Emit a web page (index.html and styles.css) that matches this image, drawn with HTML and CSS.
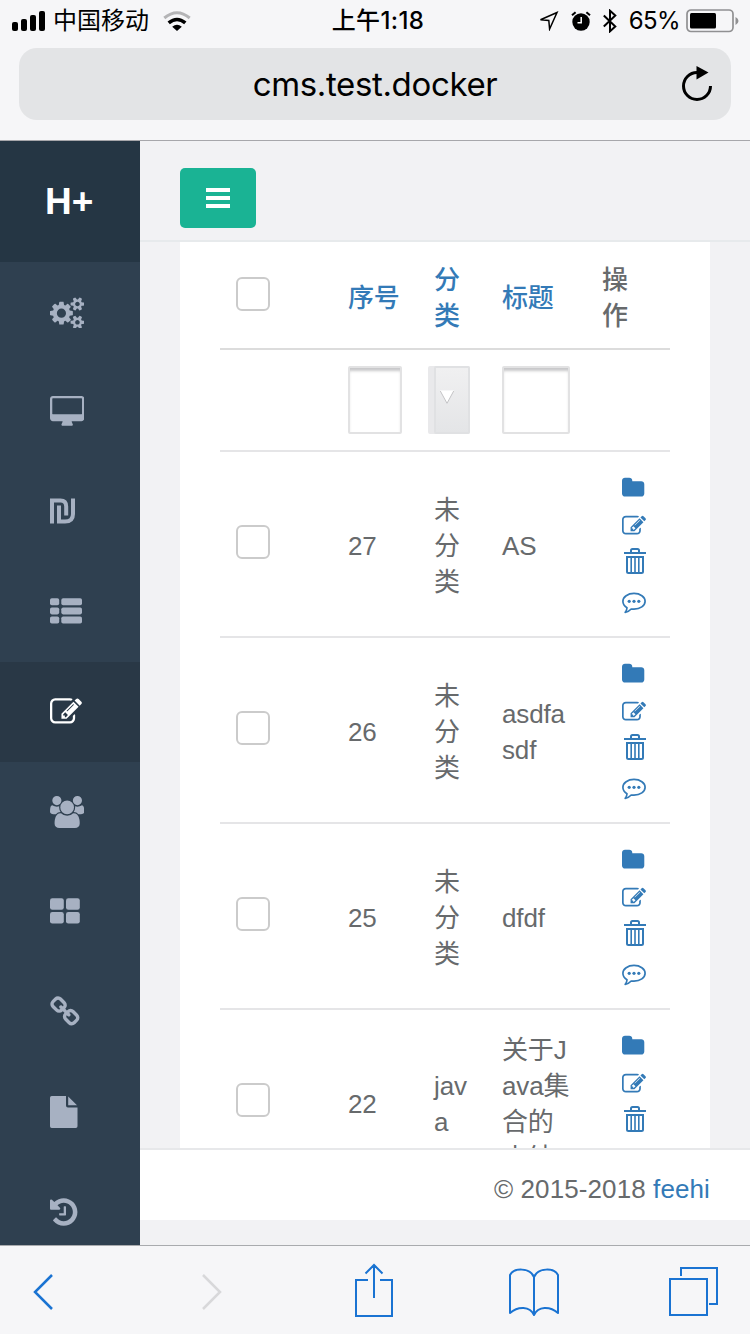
FILE: index.html
```html
<!DOCTYPE html>
<html lang="zh-CN">
<head>
<meta charset="utf-8">
<title>cms.test.docker</title>
<link rel="stylesheet" href="styles.css">
</head>
<body>
<svg class="defs" width="0" height="0" aria-hidden="true">
  <symbol id="edit" viewBox="0 0 1792 1792"><path d="M888 1184l116-116-152-152-116 116v56h96v96h56zm440-720q-16-16-33 1l-350 350q-17 17-1 33t33-1l350-350q17-17 1-33zm80 594v190q0 119-84.500 203.500t-203.500 84.500h-832q-119 0-203.500-84.500t-84.500-203.500v-832q0-119 84.500-203.500t203.500-84.500h832q63 0 117 25 15 7 18 23 3 17-9 29l-49 49q-14 14-32 8-23-6-45-6h-832q-66 0-113 47t-47 113v832q0 66 47 113t113 47h832q66 0 113-47t47-113v-126q0-13 9-22l64-64q15-15 35-7t20 29zm-96-738l288 288-672 672h-288v-288zm444 132l-92 92-288-288 92-92q28-28 68-28t68 28l152 152q28 28 28 68t-28 68z"/></symbol>
  <symbol id="folder" viewBox="64 0 1792 1792"><path d="M1728 608v704q0 92-66 158t-158 66h-1216q-92 0-158-66t-66-158v-960q0-92 66-158t158-66h320q92 0 158 66t66 158v32h672q92 0 158 66t66 158z"/></symbol>
  <symbol id="trash" viewBox="0 0 22 26"><g fill="none" stroke="currentColor" stroke-width="2"><path d="M0 5h22M7 5V2.500Q7 1 8.500 1h5Q15 1 15 2.500V5"/><path d="M3 9h16v14.500Q19 25 17.500 25h-13Q3 25 3 23.500z"/><path stroke-width="1.600" d="M7.200 9v15M11 9v15M14.800 9v15"/></g></symbol>
  <symbol id="comment" viewBox="0 0 24 22"><path d="M12 1.400c6.200 0 11.100 3.500 11.100 7.900s-4.900 7.900-11.100 7.900c-1 0-1.900-.1-2.800-.2-1.700 1.900-3.700 3-6 3.300 1.200-1.200 1.700-2.400 1.800-4.500C2.500 14.300.9 12 .9 9.300.9 4.900 5.800 1.400 12 1.400z" fill="none" stroke="currentColor" stroke-width="1.700" stroke-linejoin="round"/><g><circle cx="7.200" cy="9.300" r="1.600"/><circle cx="12" cy="9.300" r="1.600"/><circle cx="16.800" cy="9.300" r="1.600"/></g></symbol>
</svg>

<header class="browser-top">
  <div class="status">
    <div class="status-left">
      <svg class="signal" width="34" height="20" viewBox="0 0 34 20"><rect x="0" y="11" width="6" height="9" rx="2"/><rect x="9" y="8" width="6" height="12" rx="2"/><rect x="18" y="4" width="6" height="16" rx="2"/><rect x="27" y="0" width="6" height="20" rx="2"/></svg>
      <span class="carrier">中国移动</span>
      <svg class="wifi" width="28" height="20" viewBox="0 0 28 20" fill="none"><path d="M1.300 7Q14-3.600 26.700 7" fill="none" stroke="#b4b4b6" stroke-width="3"/><path d="M5.700 11.900q8.300-6.800 16.600 0" fill="none" stroke="#000" stroke-width="3.600"/><path d="M9.200 15.700q4.800-3.800 9.600 0L14 20z" fill="#000"/></svg>
    </div>
    <div class="clock">上午1:18</div>
    <div class="status-right">
      <svg width="20" height="20" viewBox="0 0 20 20"><path d="M18 1.500L1.500 8.700l8.300.7.800 8.600z" fill="none" stroke="#000" stroke-width="1.500"/></svg>
      <svg class="alarm" width="20" height="20" viewBox="0 0 20 20"><circle cx="10" cy="11" r="8.700"/><path d="M1 4.300L4.600 1.200M19 4.300L15.400 1.200" stroke="#000" stroke-width="2"/><path d="M10.200 6v5.800H6.500" fill="none" stroke="#fff" stroke-width="1.500"/></svg>
      <svg class="bluetooth" width="14" height="24" viewBox="0 0 14 24"><path d="M.8 6.500l11.500 11L7 22.300V1.700l5.300 4.800-11.500 11" fill="none" stroke="#000" stroke-width="2"/></svg>
      <span class="percent">65%</span>
      <svg width="53" height="24" viewBox="0 0 53 24"><rect x="1" y="1" width="46" height="21.500" rx="4" fill="none" stroke="#909092" stroke-width="1.700"/><rect x="4" y="4" width="26" height="15.500" rx="1.500"/><path d="M49.500 8q3 1.500 3 4t-3 4z" fill="#909092"/></svg>
    </div>
  </div>
  <div class="address">
    <span class="url">cms.test.docker</span>
    <svg class="reload" width="32" height="36" viewBox="0 0 32 36"><path d="M16 6.500A13.500 13.500 0 1 0 29.500 20" fill="none" stroke="#000" stroke-width="3"/><path d="M15.500 0L27.500 6.500 15.500 13.500z"/></svg>
  </div>
</header>

<div class="app">
  <nav class="sidebar">
    <div class="brand">H+</div>
    <a class="item"><svg width="34.300" height="32" viewBox="0 0 1920 1792"><path fill-rule="evenodd" d="M896 960q0-106-75-181t-181-75-181 75-75 181 75 181 181 75 181-75 75-181zm768 512q0-52-38-90t-90-38-90 38-38 90q0 53 37.500 90.500t90.500 37.500 90.500-37.500 37.500-90.500zm0-1024q0-52-38-90t-90-38-90 38-38 90q0 53 37.500 90.500t90.500 37.500 90.500-37.500 37.500-90.500zm-384 421v185q0 10-7 19.500t-16 10.500l-155 24q-11 35-32 76 34 48 90 115 7 11 7 20 0 12-7 19-23 30-82.500 89.500t-78.500 59.500q-11 0-21-7l-115-90q-37 19-77 31-11 108-23 155-7 24-30 24h-186q-11 0-20-7.500t-10-17.500l-23-153q-34-10-75-31l-118 89q-7 7-20 7-11 0-21-8-144-133-144-160 0-9 7-19 10-14 41-53t47-61q-23-44-35-82l-152-24q-10-1-17-9.500t-7-19.500v-185q0-10 7-19.500t16-10.500l155-24q11-35 32-76-34-48-90-115-7-11-7-20 0-12 7-20 22-30 82-89t79-59q11 0 21 7l115 90q34-18 77-32 11-108 23-154 7-24 30-24h186q11 0 20 7.500t10 17.500l23 153q34 10 75 31l118-89q8-7 20-7 11 0 21 8 144 133 144 160 0 8-7 19-12 16-42 54t-45 60q23 48 34 82l152 23q10 2 17 10.500t7 19.500zm640 533v140q0 16-149 31-12 27-30 52 51 113 51 138 0 4-4 7-122 71-124 71-8 0-46-47t-52-68q-20 2-30 2t-30-2q-14 21-52 68t-46 47q-2 0-124-71-4-3-4-7 0-25 51-138-18-25-30-52-149-15-149-31v-140q0-16 149-31 13-29 30-52-51-113-51-138 0-4 4-7 4-2 35-20t59-34 30-16q8 0 46 46.500t52 67.500q20-2 30-2t30 2q51-71 92-112l6-2q4 0 124 70 4 3 4 7 0 25-51 138 17 23 30 52 149 15 149 31zm0-1024v140q0 16-149 31-12 27-30 52 51 113 51 138 0 4-4 7-122 71-124 71-8 0-46-47t-52-68q-20 2-30 2t-30-2q-14 21-52 68t-46 47q-2 0-124-71-4-3-4-7 0-25 51-138-18-25-30-52-149-15-149-31v-140q0-16 149-31 13-29 30-52-51-113-51-138 0-4 4-7 4-2 35-20t59-34 30-16q8 0 46 46.500t52 67.500q20-2 30-2t30 2q51-71 92-112l6-2q4 0 124 70 4 3 4 7 0 25-51 138 17 23 30 52 149 15 149 31z"/></svg></a>
    <a class="item"><svg width="34.300" height="32" viewBox="-64 0 1920 1792"><path d="M1728 992v-832q0-13-9.500-22.500t-22.500-9.500h-1600q-13 0-22.500 9.500t-9.500 22.500v832q0 13 9.500 22.500t22.500 9.500h1600q13 0 22.500-9.500t9.500-22.500zm128-832v1088q0 66-47 113t-113 47h-544q0 37 16 77.500t32 71 16 43.500q0 26-19 45t-45 19h-512q-26 0-45-19t-19-45q0-14 16-44t32-70 16-78h-544q-66 0-113-47t-47-113v-1088q0-66 47-113t113-47h1600q66 0 113 47t47 113z"/></svg></a>
    <a class="item"><svg width="26" height="32" viewBox="0 0 26 32"><g fill="none" stroke="currentColor" stroke-width="4"><path d="M2 27.500V4.500H10.500Q16.200 4.500 16.200 10.500V19.500"/><path d="M9 9.500V25.500H15Q23 25.500 23 18V2.500"/></g></svg></a>
    <a class="item"><svg width="32" height="32" viewBox="0 0 32 32"><rect y="2.300" width="9.200" height="7" rx="1.800"/><rect x="11.300" y="2.300" width="20.700" height="7" rx="1.800"/><rect y="11.400" width="9.200" height="7" rx="1.800"/><rect x="11.300" y="11.400" width="20.700" height="7" rx="1.800"/><rect y="20.500" width="9.200" height="7" rx="1.800"/><rect x="11.300" y="20.500" width="20.700" height="7" rx="1.800"/></svg></a>
    <a class="item active"><svg width="32" height="32"><use href="#edit"/></svg></a>
    <a class="item"><svg width="34.300" height="32" viewBox="0 0 1920 1792"><path d="M593 896q-162 5-265 128h-134q-82 0-138-40.500t-56-118.500q0-353 124-353 6 0 43.500 21t97.500 42.500 119 21.500q67 0 133-23-5 37-5 66 0 139 81 256zm1071 637q0 120-73 189.500t-194 69.500h-874q-121 0-194-69.500t-73-189.500q0-53 3.500-103.500t14-109 26.500-108.500 43-97.500 62-81 85.500-53.500 111.500-20q10 0 43 21.500t73 48 107 48 135 21.500 135-21.500 107-48 73-48 43-21.500q61 0 111.500 20t85.500 53.500 62 81 43 97.500 26.500 108.500 14 109 3.500 103.500zm-1024-1277q0 106-75 181t-181 75-181-75-75-181 75-181 181-75 181 75 75 181zm704 384q0 159-112.500 271.500t-271.500 112.500-271.500-112.500-112.500-271.500 112.500-271.500 271.500-112.500 271.500 112.500 112.500 271.500zm576 225q0 78-56 118.500t-138 40.500h-134q-103-123-265-128 81-117 81-256 0-29-5-66 66 23 133 23 59 0 119-21.500t97.500-42.500 43.500-21q124 0 124 353zm-128-609q0 106-75 181t-181 75-181-75-75-181 75-181 181-75 181 75 75 181z"/></svg></a>
    <a class="item"><svg width="30" height="32" viewBox="0 0 30 32"><rect y="2.300" width="13.800" height="11.500" rx="2.300"/><rect x="16" y="2.300" width="13.800" height="11.500" rx="2.300"/><rect y="16" width="13.800" height="11.500" rx="2.300"/><rect x="16" y="16" width="13.800" height="11.500" rx="2.300"/></svg></a>
    <a class="item"><svg width="32" height="32" viewBox="0 0 1792 1792"><path d="M1456 1216q0-40-28-68l-208-208q-28-28-68-28-42 0-72 32 3 3 19 18.500t21.500 21.500 15 19 13 25.500 3.500 27.500q0 40-28 68t-68 28q-15 0-27.500-3.500t-25.500-13-19-15-21.500-21.500-18.500-19q-33 31-33 73 0 40 28 68l206 207q27 27 68 27 40 0 68-26l147-146q28-28 28-67zm-703-705q0-40-28-68l-206-207q-28-28-68-28-39 0-68 27l-147 146q-28 28-28 67 0 40 28 68l208 208q27 27 68 27 42 0 72-31-3-3-19-18.500t-21.500-21.500-15-19-13-25.500-3.500-27.500q0-40 28-68t68-28q15 0 27.500 3.500t25.500 13 19 15 21.500 21.500 18.500 19q33-31 33-73zm895 705q0 120-85 203l-147 146q-83 83-203 83-121 0-204-85l-206-207q-83-83-83-203 0-123 88-209l-88-88q-86 88-208 88-120 0-204-84l-208-208q-84-84-84-204t85-203l147-146q83-83 203-83 121 0 204 85l206 207q83 83 83 203 0 123-88 209l88 88q86-88 208-88 120 0 204 84l208 208q84 84 84 204z"/></svg></a>
    <a class="item"><svg width="28" height="32" viewBox="0 0 28 32"><path d="M0 1.700Q0 0 1.700 0H16v9.500q0 1.900 1.900 1.900h9.600v18.900q0 1.700-1.700 1.700H1.700Q0 32 0 30.300zM18.200.6L27 9.200h-8.800z"/></svg></a>
    <a class="item"><svg width="32" height="32" viewBox="128 0 1792 1792"><path d="M1664 896q0 156-61 298t-164 245-245 164-298 61q-172 0-327-72.500t-264-204.500q-7-10-6.500-22.500t8.500-20.500l137-138q10-9 25-9 16 2 23 12 73 95 179 147t225 52q104 0 198.500-40.500t163.500-109.500 109.500-163.500 40.500-198.500-40.500-198.500-109.500-163.500-163.500-109.500-198.500-40.500q-98 0-188 35.500t-160 101.500l137 138q31 30 14 69-17 40-59 40h-448q-26 0-45-19t-19-45v-448q0-42 40-59 39-17 69 14l130 129q107-101 244.500-156.500t284.500-55.500q156 0 298 61t245 164 164 245 61 298zm-640-288v448q0 14-9 23t-23 9h-320q-14 0-23-9t-9-23v-64q0-14 9-23t23-9h224v-352q0-14 9-23t23-9h64q14 0 23 9t9 23z"/></svg></a>
  </nav>

  <main class="page">
    <div class="navbar">
      <button class="toggle" aria-label="menu"><span class="bar"></span><span class="bar"></span><span class="bar"></span></button>
    </div>
    <div class="content">
      <div class="panel">
        <div class="row head">
          <div class="cell"><span class="check"></span></div>
          <div class="cell link">序号</div>
          <div class="cell link">分类</div>
          <div class="cell link">标题</div>
          <div class="cell op">操作</div>
        </div>
        <div class="row filters">
          <div class="cell"></div>
          <div class="cell"><span class="field"></span></div>
          <div class="cell"><span class="select"><span class="select-face"><svg width="14" height="14" viewBox="0 0 14 14"><path d="M0 .5h14L7 13.500z" fill="#fff"/><path d="M.3 1L7 13.300 13.700 1" fill="none" stroke="#c3c3c5"/></svg></span></span></div>
          <div class="cell"><span class="field wide"></span></div>
          <div class="cell"></div>
        </div>
        <div class="row">
          <div class="cell"><span class="check"></span></div>
          <div class="cell">27</div>
          <div class="cell">未分类</div>
          <div class="cell">AS</div>
          <div class="actions"><svg class="ico"><use href="#folder"/></svg><svg class="ico"><use href="#edit"/></svg><svg class="trash"><use href="#trash"/></svg><svg class="comment"><use href="#comment"/></svg></div>
        </div>
        <div class="row">
          <div class="cell"><span class="check"></span></div>
          <div class="cell">26</div>
          <div class="cell">未分类</div>
          <div class="cell">asdfasdf</div>
          <div class="actions"><svg class="ico"><use href="#folder"/></svg><svg class="ico"><use href="#edit"/></svg><svg class="trash"><use href="#trash"/></svg><svg class="comment"><use href="#comment"/></svg></div>
        </div>
        <div class="row">
          <div class="cell"><span class="check"></span></div>
          <div class="cell">25</div>
          <div class="cell">未分类</div>
          <div class="cell">dfdf</div>
          <div class="actions"><svg class="ico"><use href="#folder"/></svg><svg class="ico"><use href="#edit"/></svg><svg class="trash"><use href="#trash"/></svg><svg class="comment"><use href="#comment"/></svg></div>
        </div>
        <div class="row">
          <div class="cell"><span class="check"></span></div>
          <div class="cell">22</div>
          <div class="cell">java</div>
          <div class="cell">关于Java集合的小结</div>
          <div class="actions"><svg class="ico"><use href="#folder"/></svg><svg class="ico"><use href="#edit"/></svg><svg class="trash"><use href="#trash"/></svg></div>
        </div>
      </div>
    </div>
    <footer class="footer">© 2015-2018&nbsp;<a class="footer-link">feehi</a></footer>
  </main>
</div>

<div class="toolbar">
  <svg class="back" width="22" height="38" viewBox="0 0 22 38"><path d="M20 2L3 19l17 17" fill="none" stroke="#1a73d2" stroke-width="2.500"/></svg>
  <svg class="forward" width="22" height="38" viewBox="0 0 22 38"><path d="M3 2l17 17L3 36" fill="none" stroke="#d8d8da" stroke-width="2.500"/></svg>
  <svg class="share" width="40" height="54" viewBox="0 0 40 54"><path d="M14 17H2v36h36V17H26M20 35V2M11.500 10.500L20 2l8.500 8.500" fill="none" stroke="#1a73d2" stroke-width="2"/></svg>
  <svg class="book" width="52" height="50" viewBox="0 0 52 50"><path d="M26 48V10C22 .5 6 .5 2 8v38c8-7 20-7 24 2 4-9 16-9 24-2V8C46 .5 30 .5 26 10" fill="none" stroke="#1a73d2" stroke-width="2" stroke-linejoin="round"/></svg>
  <svg class="tabs" width="50" height="50" viewBox="0 0 50 50"><path d="M1 13h37v36H1zM12 10V2h36v36h-8" fill="none" stroke="#1a73d2" stroke-width="2"/></svg>
</div>
</body>
</html>
```

FILE: styles.css
```css
* { box-sizing: border-box; }
body {
  margin: 0;
  width: 750px;
  height: 1334px;
  overflow: hidden;
  display: flex;
  flex-direction: column;
  background: #f6f6f8;
  font-family: "Liberation Sans", "Noto Sans CJK SC", sans-serif;
  font-size: 26px;
  line-height: 36px;
  color: #676a6c;
}
svg { display: block; flex: none; fill: currentColor; }
.defs { position: absolute; }

.browser-top {
  height: 141px;
  flex: none;
  color: #000;
  border-bottom: 1px solid #a7a7ab;
  font-family: Inter, "Noto Sans CJK SC", sans-serif;
}
.status {
  height: 48px;
  display: grid;
  grid-template-columns: 1fr auto 1fr;
  align-items: center;
  padding: 0 11px 7px 12px;
  font-size: 24px;
}
.status-left, .status-right { display: flex; align-items: center; }
.status-right { justify-content: flex-end; }
.carrier { margin-left: 7px; }
.wifi { margin-left: 14px; }
.clock {
  font-weight: 500;
  font-size: 24px;
  letter-spacing: .4px;
  padding: 1px 0 0 5px;
}
.alarm { margin-left: 12px; }
.bluetooth { margin-left: 12px; }
.percent { margin: 0 6px 0 12px; font-size: 24px; letter-spacing: -.6px; }
.address {
  height: 72px;
  margin: 0 19px;
  display: flex;
  align-items: center;
  justify-content: center;
  position: relative;
  border-radius: 18px;
  background: #e3e4e6;
  font-size: 33px;
  letter-spacing: -.35px;
}
.reload { position: absolute; right: 18px; top: 18px; }

.app { flex: 1; min-height: 0; display: flex; background: #f2f2f4; }
.sidebar { width: 140px; flex: none; overflow: hidden; background: #2f4050; color: #a7b1c2; }
.brand {
  height: 121px;
  background: #253644;
  color: #fff;
  font: bold 37px/122px "Liberation Sans", sans-serif;
  padding-left: 45px;
}
.item { height: 100px; display: flex; align-items: center; padding-left: 50px; }
.item.active { background: #293846; color: #fff; }

.page { flex: 1; min-width: 0; display: flex; flex-direction: column; padding-bottom: 25px; }
.navbar {
  height: 101px;
  flex: none;
  padding: 27px 40px 0;
  border-bottom: 2px solid #e7eaec;
}
.toggle {
  width: 76px;
  height: 60px;
  border: 0;
  border-radius: 5px;
  background: #1ab394;
  display: flex;
  flex-direction: column;
  align-items: center;
  justify-content: center;
  gap: 4px;
  padding: 0;
}
.bar { width: 24px; height: 4px; background: #fff; }
.content { flex: 1; min-height: 0; overflow: hidden; padding: 0 40px; }
.panel { background: #fff; padding: 0 40px; min-height: 100%; }
.row {
  height: 186px;
  display: grid;
  grid-template-columns: 112px 86px 68px 100px 84px;
  align-items: center;
  border-bottom: 2px solid #e5e5e7;
}
.cell { padding: 4px 16px 0; word-break: break-all; letter-spacing: -.15px; }
.head { height: 108px; font-weight: 500; border-bottom-color: #dcdcdc; }
.head .cell { padding-top: 6px; }
.head .op { padding-right: 40px; }
.link, .footer-link { color: #337ab7; }
.check {
  display: block;
  width: 34px;
  height: 34px;
  margin-bottom: 8px;
  border: 2px solid #cbcbcb;
  border-radius: 6px;
  background: #fff;
}
.filters { height: 102px; }
.filters .cell { padding-top: 0; }
.field {
  display: block;
  width: 54px;
  height: 68px;
  border: 2px solid #e2e2e3;
  border-radius: 2px;
  box-shadow: inset 0 4px 3px -1px #c8c8ca;
}
.field.wide { width: 68px; }
.select {
  display: flex;
  justify-content: flex-end;
  width: 42px;
  height: 68px;
  margin-left: -6px;
  background: #e9e9eb;
  border-radius: 2px;
}
.select-face {
  width: 36px;
  border: 2px solid #e0e1e3;
  border-radius: 2px;
  background: linear-gradient(#f0f0f1, #e4e5e7);
  display: flex;
  padding: 22px 0 0 4px;
}
.actions {
  align-self: start;
  padding: 24px 0 0 36px;
  color: #337ab7;
}
.ico { width: 24px; height: 24px; margin-bottom: 14px; }
.trash { width: 22px; height: 26px; margin: -4px 0 18px 2px; }
.comment { width: 24px; height: 22px; }
.footer {
  height: 72px;
  flex: none;
  display: flex;
  align-items: center;
  justify-content: flex-end;
  padding: 8px 40px 0;
  border-top: 2px solid #e7e8ea;
  background: #fff;
  letter-spacing: .1px;
}
.toolbar {
  height: 89px;
  flex: none;
  display: flex;
  align-items: center;
  padding: 4px 31px 0 32px;
  border-top: 1px solid #a9abae;
}
.forward { margin-left: 146px; }
.share { margin: -5px 0 0 132px; }
.book { margin-left: 114px; }
.tabs { margin: -3px 0 0 109px; }
```
